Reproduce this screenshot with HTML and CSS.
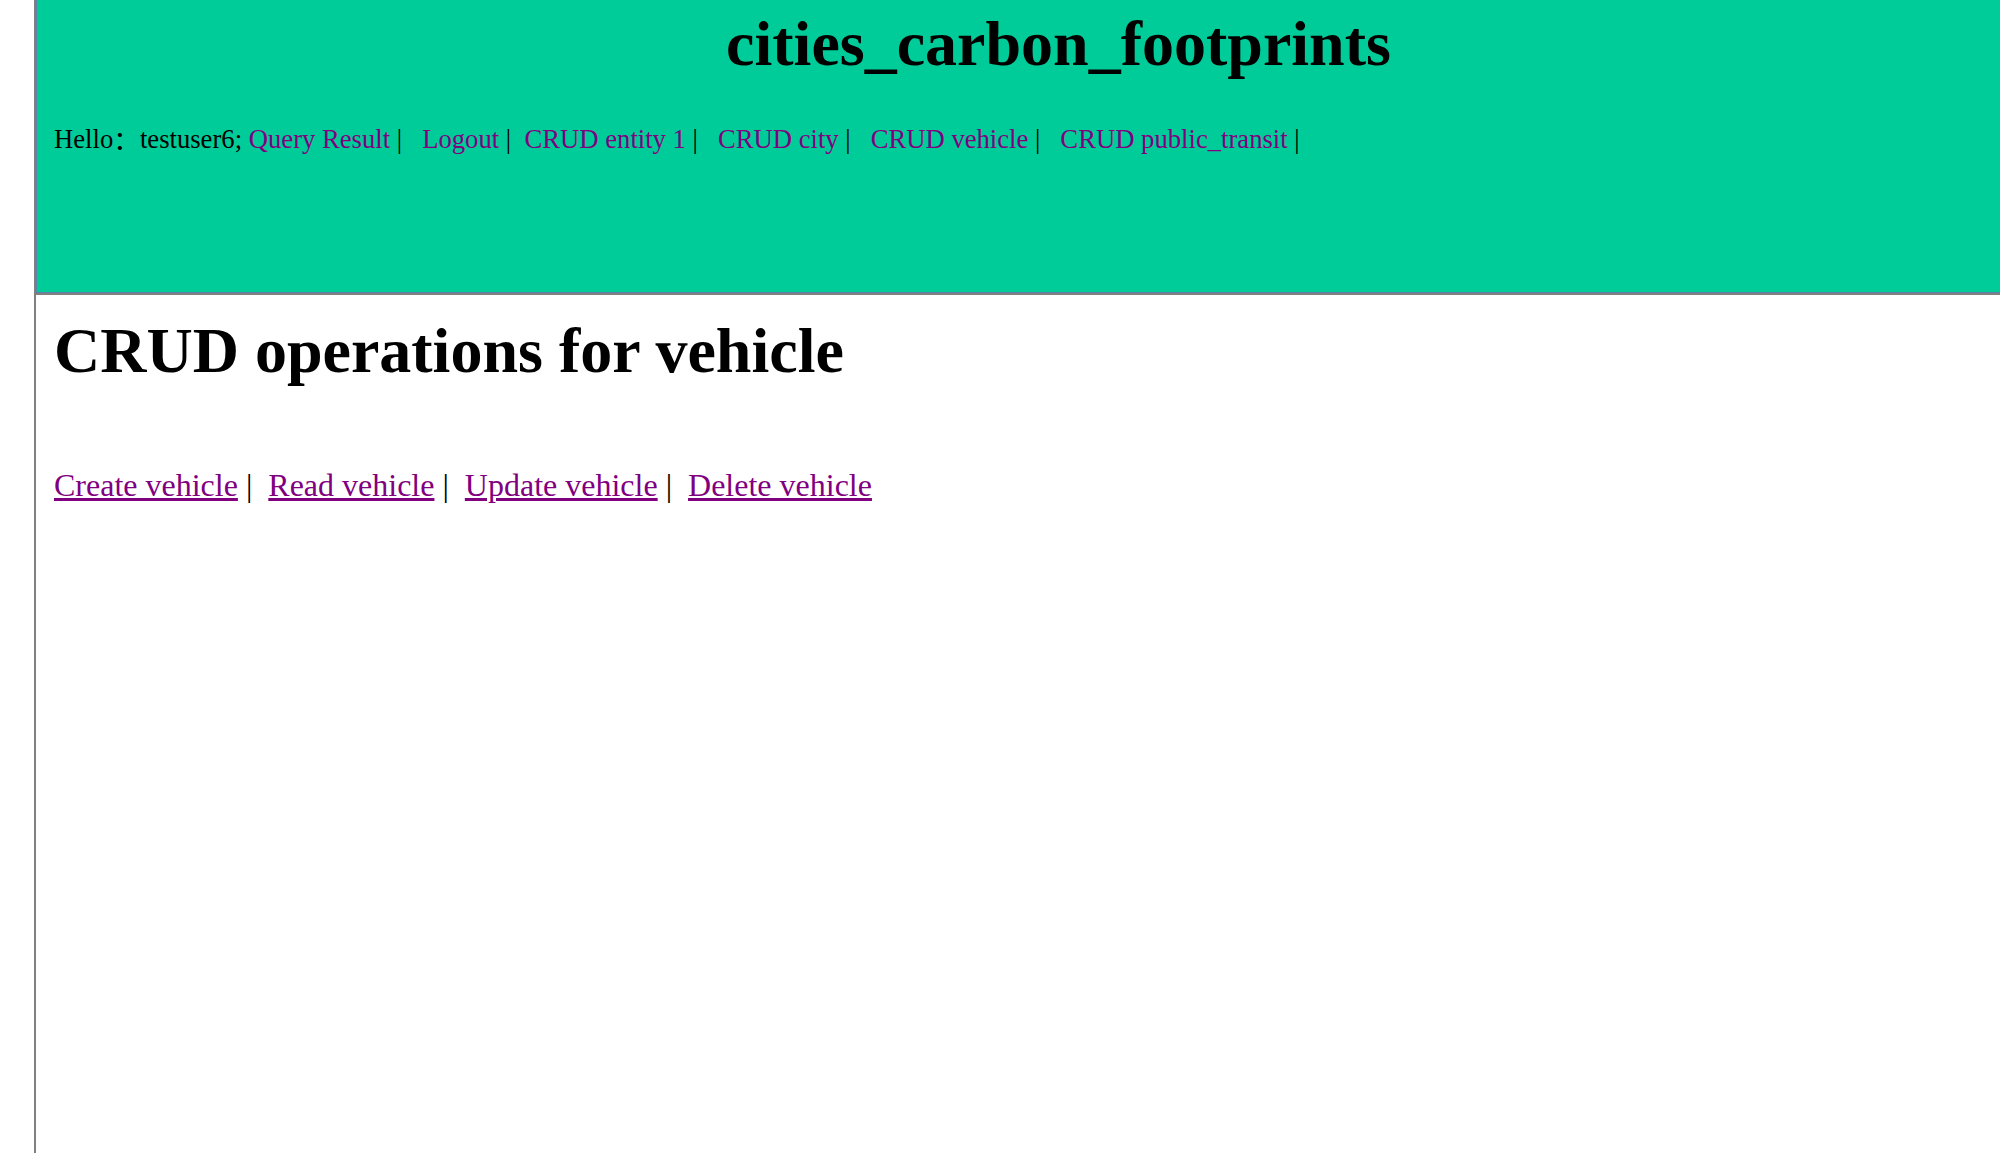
FILE: index.html
```html
<!DOCTYPE html>
<html lang="en">
<head>
<meta charset="utf-8">
<title>cities_carbon_footprints</title>
<link rel="stylesheet" href="styles.css">
</head>
<body>
<div class="page">
  <header class="header">
    <h1 class="site-title">cities_carbon_footprints</h1>
    <p class="nav">Hello<span class="cjk">：</span>testuser6; <a href="#">Query Result</a> <span class="sep">|</span>&nbsp;&nbsp;&nbsp;<a href="#">Logout</a> <span class="sep">|</span>&nbsp;&nbsp;<a href="#">CRUD entity 1</a> <span class="sep">|</span>&nbsp;&nbsp;&nbsp;<a href="#">CRUD city</a> <span class="sep">|</span>&nbsp;&nbsp;&nbsp;<a href="#">CRUD vehicle</a> <span class="sep">|</span>&nbsp;&nbsp;&nbsp;<a href="#">CRUD public_transit</a> <span class="sep">|</span></p>
  </header>
  <main class="content">
    <h2 class="page-title">CRUD operations for vehicle</h2>
    <p class="ops"><a href="#">Create vehicle</a> |&nbsp; <a href="#">Read vehicle</a> |&nbsp; <a href="#">Update vehicle</a> |&nbsp; <a href="#">Delete vehicle</a></p>
  </main>
</div>
</body>
</html>
```

FILE: styles.css
```css
html, body {
  margin: 0;
  padding: 0;
  background: #ffffff;
}
body {
  font-family: "Liberation Serif", "Noto Sans CJK SC", serif;
  color: #000;
  overflow: hidden;
}
.page {
  margin-left: 34px;
  border-left: 2px solid #808080;
  min-height: 1153px;
}
.header {
  background: #00cc99;
  border-left: 1px solid #5a82a8;
  border-bottom: 1px solid #5a82a8;
  box-shadow: 0 2px 0 #808080;
  height: 292px;
  padding-left: 17px;
}
.site-title {
  margin: 0;
  font-size: 64px;
  font-weight: bold;
  line-height: 87px;
  text-align: center;
  padding-left: 63px;
}
.nav {
  margin: 37px 0 0 0;
  font-size: 26.67px;
  line-height: 30px;
  white-space: nowrap;
}
.cjk {
  font-family: "Noto Sans CJK SC", sans-serif;
  line-height: 1;
  vertical-align: -2px;
}
.nav a {
  color: #800080;
  text-decoration: none;
}
.sep {
  color: #000;
}
.content {
  padding-left: 18px;
}
.page-title {
  margin: 21px 0 0 0;
  font-size: 64px;
  font-weight: bold;
  line-height: 74px;
}
.ops {
  margin: 79px 0 0 0;
  font-size: 32px;
  line-height: 37px;
}
.ops a {
  color: #800080;
  text-decoration: underline;
}
```
